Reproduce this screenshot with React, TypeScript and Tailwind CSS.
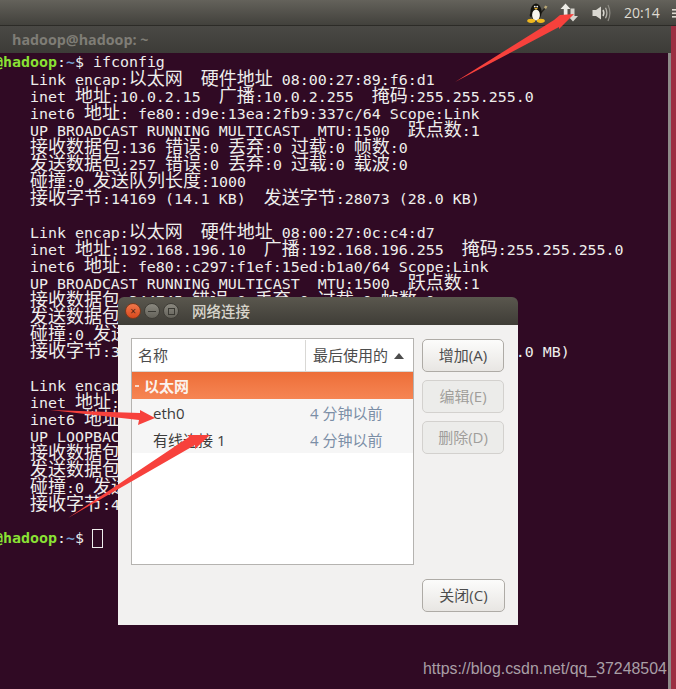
const mono = 'font-["DejaVu_Sans_Mono","Noto_Sans_CJK_SC",monospace]';

const lines = [
  '          Link encap:以太网  硬件地址 08:00:27:89:f6:d1',
  '          inet 地址:10.0.2.15  广播:10.0.2.255  掩码:255.255.255.0',
  '          inet6 地址: fe80::d9e:13ea:2fb9:337c/64 Scope:Link',
  '          UP BROADCAST RUNNING MULTICAST  MTU:1500  跃点数:1',
  '          接收数据包:136 错误:0 丢弃:0 过载:0 帧数:0',
  '          发送数据包:257 错误:0 丢弃:0 过载:0 载波:0',
  '          碰撞:0 发送队列长度:1000',
  '          接收字节:14169 (14.1 KB)  发送字节:28073 (28.0 KB)',
  '',
  '          Link encap:以太网  硬件地址 08:00:27:0c:c4:d7',
  '          inet 地址:192.168.196.10  广播:192.168.196.255  掩码:255.255.255.0',
  '          inet6 地址: fe80::c297:f1ef:15ed:b1a0/64 Scope:Link',
  '          UP BROADCAST RUNNING MULTICAST  MTU:1500  跃点数:1',
  '          接收数据包:344745 错误:0 丢弃:0 过载:0 帧数:0',
  '          发送数据包:120451 错误:0 丢弃:0 过载:0 载波:0',
  '          碰撞:0 发送队列长度:1000',
  '          接收字节:346789023 (346.7 MB)  发送字节:123456789 (123.0 MB)',
  '',
  '          Link encap:本地环回',
  '          inet 地址:127.0.0.1  掩码:255.0.0.0',
  '          inet6 地址: ::1/128 Scope:Host',
  '          UP LOOPBACK RUNNING  MTU:65536  跃点数:1',
  '          接收数据包:1820 错误:0 丢弃:0 过载:0 帧数:0',
  '          发送数据包:1820 错误:0 丢弃:0 过载:0 载波:0',
  '          碰撞:0 发送队列长度:1000',
  '          接收字节:4096 (4.0 KB)  发送字节:4096 (4.0 KB)',
  '',
];

function TermLine({ text }: { text: string }) {
  const parts = text.split(/([\u4e00-\u9fff]+)/);
  return (
    <div className="h-[17px] leading-[17px] whitespace-pre">
      {parts.map((p, i) =>
        /[\u4e00-\u9fff]/.test(p) ? (
          <span key={i} className="text-[18px] leading-[17px]">{p}</span>
        ) : (
          <span key={i}>{p}</span>
        )
      )}
    </div>
  );
}

function Prompt({ children }: { children?: React.ReactNode }) {
  return (
    <div className="h-[17px] leading-[17px] whitespace-pre flex items-center">
      <span className="text-[#8ae234] font-bold">hadoop@hadoop</span>
      <span>:</span>
      <span className="text-[#729fcf] font-bold">~</span>
      <span>$ </span>
      {children}
    </div>
  );
}

function Tux() {
  return (
    <svg width="21" height="20" viewBox="0 0 21 20">
      <path d="M12 12 L19 4" stroke="#26251f" strokeWidth="1.5" />
      <path d="M18 2.5 l2.5 1 -1.5 2.5 -2 -1z" fill="#b9a878" />
      <ellipse cx="9" cy="9" rx="5.6" ry="8.6" fill="#14130e" />
      <path d="M3.5 14 Q1.5 12 4.5 8.5 L5.5 12z" fill="#14130e" />
      <ellipse cx="9" cy="12" rx="3.9" ry="5.6" fill="#f6f4ec" />
      <circle cx="7.8" cy="3.6" r="0.9" fill="#f6f4ec" />
      <circle cx="10.2" cy="3.6" r="0.9" fill="#f6f4ec" />
      <path d="M7 5 h4 l-2 1.8z" fill="#eeb422" />
      <ellipse cx="4.2" cy="17.8" rx="4" ry="2.1" fill="#f0b81e" />
      <ellipse cx="13.8" cy="17.8" rx="4" ry="2.1" fill="#f0b81e" />
    </svg>
  );
}

function UpDown() {
  return (
    <svg width="19" height="19" viewBox="0 0 19 19">
      <path d="M5.5 0.5 L10.5 6 H7.5 V15.5 H3.8 V6 H0.5z" fill="#ecebe6" />
      <path d="M10.5 5.5 H14.5 V13 H18 L13 18.5 L8 13 H10.5z" fill="#d6d4ce" />
    </svg>
  );
}

function Speaker() {
  return (
    <svg width="20" height="18" viewBox="0 0 20 18" fill="none">
      <path d="M0.5 6 H4 L9 2.5 V15.5 L4 12 H0.5z" fill="#d9d7d0" />
      <path d="M11 6 Q12.8 9 11 12" stroke="#d9d7d0" strokeWidth="1.5" />
      <path d="M13.5 3.8 Q16.3 9 13.5 14.2" stroke="#b5b3ac" strokeWidth="1.3" />
      <path d="M16 1 Q19.8 9 16 17" stroke="#8e8c85" strokeWidth="1.2" />
    </svg>
  );
}

function Gear() {
  return (
    <svg width="4" height="14" viewBox="0 0 4 14" fill="#dfdbd2">
      <rect x="0" y="3" width="4" height="1.6" />
      <rect x="0" y="6.5" width="4" height="1.6" />
      <rect x="0" y="10" width="4" height="1.6" />
    </svg>
  );
}

function WinButton({ dim, label, wide }: { dim?: boolean; label: string; wide?: boolean }) {
  return (
    <button
      className={
        'h-[33px] rounded-[5px] border text-[15px] ' +
        (wide ? 'w-[83px] ' : 'w-[82px] ') +
        (dim
          ? 'border-[#d3d1ce] bg-[#ececea] text-[#a09e9b]'
          : 'border-[#aeaba6] bg-gradient-to-b from-[#fcfcfb] to-[#e8e6e3] text-[#4c4c4c]')
      }
    >
      {label}
    </button>
  );
}

function Row({ name, time }: { name: string; time: string }) {
  return (
    <div className="h-[27px] flex items-center pt-[2px] bg-[#f6f6f6] text-[15px]">
      <span className="w-[178px] pl-[21px] text-[#3c3c3c]">{name}</span>
      <span className="text-[#7b8ea6]">{time}</span>
    </div>
  );
}

function Dialog() {
  return (
    <div className='absolute left-[118px] top-[297px] w-[400px] h-[328px] flex flex-col font-["Open_Sans","Noto_Sans_CJK_SC",sans-serif]'>
      <div className="h-[28px] shrink-0 rounded-t-[6px] bg-gradient-to-b from-[#5a574e] to-[#3f3d37] flex items-center pl-[7px]">
        <div className="w-[16px] h-[16px] rounded-full bg-gradient-to-b from-[#f0774a] to-[#d9481b] border border-[#7a3a1e] flex items-center justify-center text-[#4a2010] text-[10px] leading-none">
          ×
        </div>
        <div className="ml-[3px] w-[16px] h-[16px] rounded-full bg-gradient-to-b from-[#8a887f] to-[#64625a] border border-[#3f3d37] flex items-center justify-center">
          <div className="w-[8px] h-px bg-[#3a3933]" />
        </div>
        <div className="ml-[3px] w-[16px] h-[16px] rounded-full bg-gradient-to-b from-[#8a887f] to-[#64625a] border border-[#3f3d37] flex items-center justify-center">
          <div className="w-[7px] h-[7px] border border-[#3a3933]" />
        </div>
        <span className="ml-[13px] pt-[1px] text-[14.5px] text-[#d8d5cc] font-medium">网络连接</span>
      </div>
      <div className="flex-1 bg-[#f2f1f0] flex flex-col pt-[13px] pl-[13px] pr-[13px] pb-[13px]">
        <div className="flex justify-between">
          <div className="w-[283px] h-[227px] border border-[#b5b3b0] bg-white">
            <div className="h-[33px] flex items-stretch pt-[1px] border-b border-[#d9d8d5] text-[15px] text-[#4c4c4c]">
              <div className="w-[174px] flex items-center pl-[6px] border-r border-[#d9d8d5]">名称</div>
              <div className="flex-1 flex items-center pl-[7px]">
                最后使用的
                <svg width="10" height="6" viewBox="0 0 10 6" className="ml-[6px]">
                  <path d="M5 0 L10 6 H0z" fill="#4c4c4c" />
                </svg>
              </div>
            </div>
            <div className="h-[27px] flex items-center pt-[1px] bg-gradient-to-b from-[#ed6e38] to-[#f68553] pl-[3px]">
              <div className="w-[4px] h-[2px] bg-[#f9d9c8]" />
              <span className="ml-[5px] text-[15px] font-bold text-[#fbf3ee]">以太网</span>
            </div>
            <Row name="eth0" time="4 分钟以前" />
            <Row name="有线连接 1" time="4 分钟以前" />
          </div>
          <div className="flex flex-col gap-[8px] pt-[1px] mr-[1px]">
            <WinButton label="增加(A)" />
            <WinButton dim label="编辑(E)" />
            <WinButton dim label="删除(D)" />
          </div>
        </div>
        <div className="mt-auto flex justify-end">
          <WinButton wide label="关闭(C)" />
        </div>
      </div>
    </div>
  );
}

export default function App() {
  return (
    <div className="relative w-[676px] h-[689px] overflow-hidden flex flex-col bg-[#300a24]">
      {/* top panel */}
      <div className='h-[26px] shrink-0 bg-gradient-to-b from-[#64625b] to-[#42413c] border-b border-[#2c2b27] flex items-center justify-end font-["Open_Sans",sans-serif] text-[14px] text-[#dfdbd2]'>
        <Tux />
        <div className="ml-[12px]"><UpDown /></div>
        <div className="ml-[13px]"><Speaker /></div>
        <span className="ml-[12px] w-[48px]">20:14</span>
        <Gear />
      </div>

      <div className="flex-1 flex min-h-0">
        <div className="flex-1 min-w-0 flex flex-col">
          {/* terminal window */}
          <div className='h-[27px] shrink-0 bg-gradient-to-b from-[#4a4945] to-[#3c3b37] flex items-center pl-[12px] font-["Open_Sans",sans-serif] text-[14.3px] font-bold text-[#7f7d76]'>
            hadoop@hadoop: ~
          </div>
          <div className="flex-1 flex min-h-0">
            <div className={'flex-1 min-w-0 overflow-hidden pt-[1px] text-[14.95px] text-[#eeeeec] ' + mono}>
              <div className="ml-[-60px]">
                <Prompt>ifconfig</Prompt>
                <div className="-mt-px mb-px">
                  {lines.map((l, i) => (
                    <TermLine key={i} text={l} />
                  ))}
                </div>
                <Prompt>
                  <span className="inline-block ml-[-1px] w-[11px] h-[19px] shrink-0 border border-[#eeeeec]" />
                </Prompt>
              </div>
            </div>
            <div className="w-[3px] bg-[#8d8a88]" />
          </div>
        </div>
        <div className="w-[5px] bg-[#9c2f42]" />
      </div>

      <Dialog />

      {/* red annotation arrows */}
      <svg className="absolute left-0 top-0 pointer-events-none" width="676" height="689" viewBox="0 0 676 689">
        <polygon points="455,82 554,20 560,15 574,14 559,29 559,27" fill="#f7413c" />
        <polygon points="50,410 140,413 140,410 155,418 138,425 139,420" fill="#f7413c" />
        <polygon points="68,518 189,437 188,435 210,435 195,449 195,445" fill="#f7413c" />
      </svg>

      <span className='absolute left-[423px] top-[660px] font-["Liberation_Sans",sans-serif] text-[15.9px] leading-[18px] text-[#a99fa6]'>
        https://blog.csdn.net/qq_37248504
      </span>
    </div>
  );
}
